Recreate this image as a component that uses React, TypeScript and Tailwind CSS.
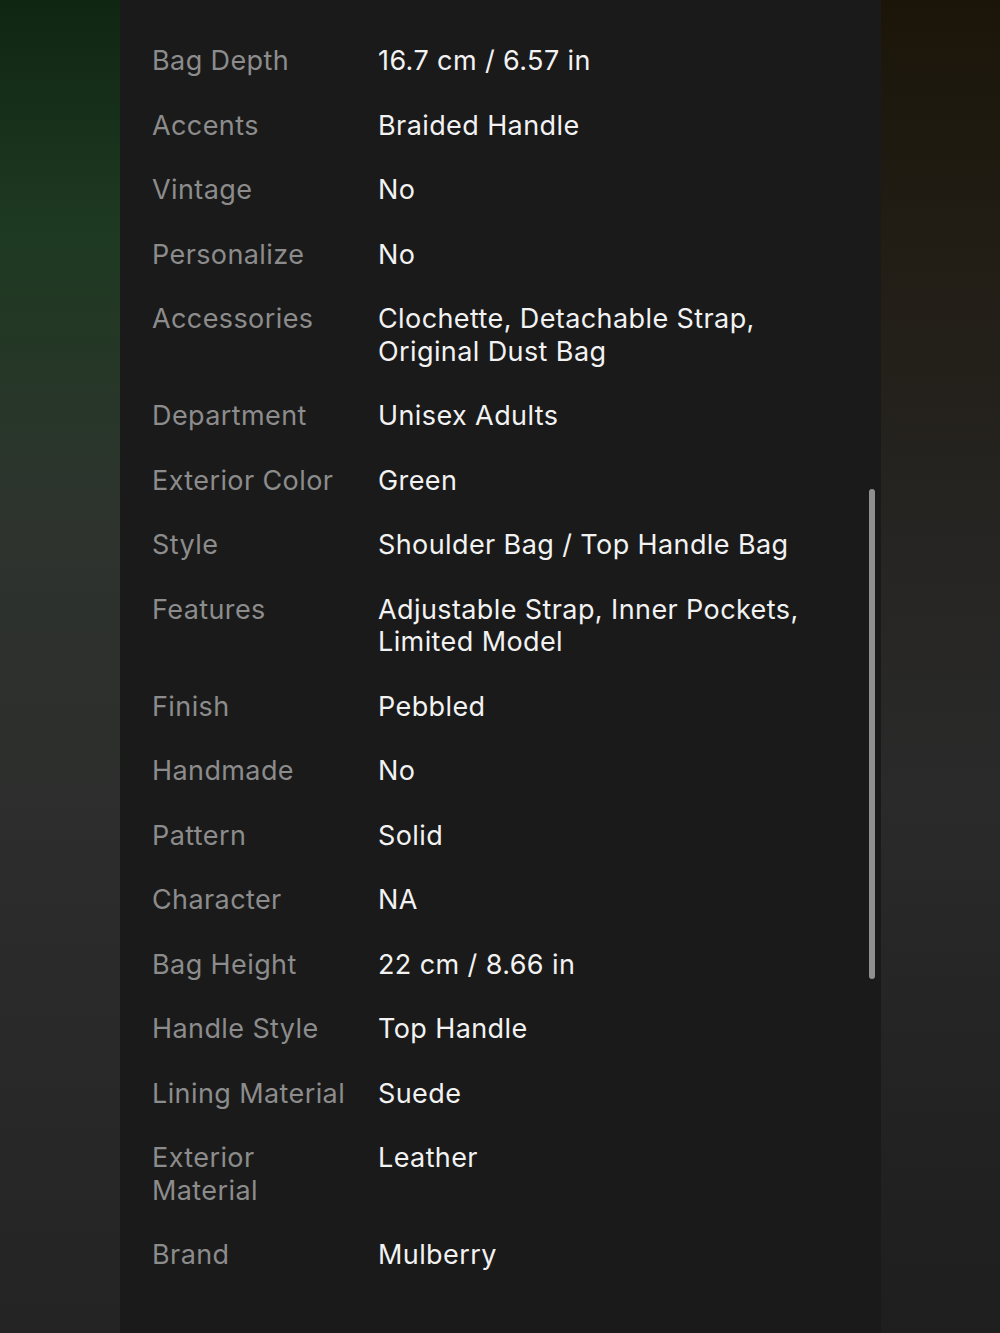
const specs: [string, string][] = [
  ["Bag Depth", "16.7 cm / 6.57 in"],
  ["Accents", "Braided Handle"],
  ["Vintage", "No"],
  ["Personalize", "No"],
  ["Accessories", "Clochette, Detachable Strap, Original Dust Bag"],
  ["Department", "Unisex Adults"],
  ["Exterior Color", "Green"],
  ["Style", "Shoulder Bag / Top Handle Bag"],
  ["Features", "Adjustable Strap, Inner Pockets, Limited Model"],
  ["Finish", "Pebbled"],
  ["Handmade", "No"],
  ["Pattern", "Solid"],
  ["Character", "NA"],
  ["Bag Height", "22 cm / 8.66 in"],
  ["Handle Style", "Top Handle"],
  ["Lining Material", "Suede"],
  ["Exterior Material", "Leather"],
  ["Brand", "Mulberry"],
];

export default function App() {
  return (
    <div className="flex h-[1333px] w-[1000px] overflow-hidden bg-[#262626] font-['Inter',sans-serif]">
      {/* blurred backdrop, left */}
      <div className="w-[120px] shrink-0 bg-[linear-gradient(180deg,#0f2613_0%,#1f3a22_18%,#2e332e_40%,#2c2c2c_65%,#242424_100%)]" />

      {/* sheet */}
      <div className="relative w-[761px] shrink-0 bg-[#1a1a1a] pl-8 pr-10 pt-[45px]">
        <div className="flex flex-col gap-8">
          {specs.map(([label, value]) => (
            <div key={label} className="flex gap-4 text-[27px] leading-[32.5px] tracking-[0.4px]">
              <div className="w-[210px] shrink-0 text-[#8c8c8c]">{label}</div>
              <div className="flex-1 text-[#f2f2f2]">{value}</div>
            </div>
          ))}
        </div>

        {/* scroll indicator */}
        <div className="absolute left-[749px] top-[489px] h-[490px] w-[6px] rounded-full bg-[#8f8f8f]" />
      </div>

      {/* blurred backdrop, right */}
      <div className="flex-1 bg-[linear-gradient(180deg,#1b1509_0%,#221e16_20%,#272625_45%,#2a2a2a_60%,#222222_85%,#1e1e1e_100%)]" />
    </div>
  );
}
